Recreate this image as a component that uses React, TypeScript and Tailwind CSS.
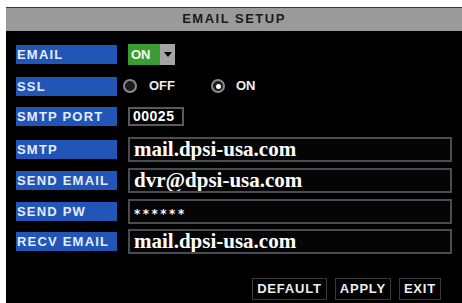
import React from "react"

const labelCls =
  "w-[101px] h-[19px] bg-[#2256b6] text-[#e4ecff] text-[13px] font-bold tracking-[1.2px] leading-[19px] pl-[1px] whitespace-nowrap"

const Label = ({ text }: { text: string }) => (
  <div className={labelCls} style={{ fontFamily: '"Liberation Sans", sans-serif' }}>
    {text}
  </div>
)

const TextBox = ({ value, small }: { value: string; small?: boolean }) => (
  <div
    className="w-[324px] h-[25px] border-2 border-[#4a4d50] bg-[#050505] text-white font-bold pl-[4px] overflow-hidden"
    style={{ fontFamily: '"Liberation Serif", serif' }}
  >
    {small ? (
      <span
        className="text-[12px] tracking-[2.5px] leading-[24px]"
        style={{ fontFamily: '"DejaVu Sans", sans-serif' }}
      >
        {value}
      </span>
    ) : (
      <span className="text-[21px] leading-[21px]">{value}</span>
    )}
  </div>
)

const Radio = ({ checked }: { checked: boolean }) => (
  <div className="w-[14px] h-[14px] rounded-full border-2 border-[#8a8a8a] bg-[#1c1c1c] flex items-center justify-center">
    {checked ? <div className="w-[5px] h-[5px] rounded-full bg-white" /> : null}
  </div>
)

const Btn = ({ text }: { text: string }) => (
  <div
    className="h-[22px] px-[4px] border border-[#3a3a3a] bg-black text-[#eeeeee] text-[13px] font-bold tracking-[0.8px] leading-[20px]"
    style={{ fontFamily: '"Liberation Sans", sans-serif' }}
  >
    {text}
  </div>
)

export default function App() {
  const sans = { fontFamily: '"Liberation Sans", sans-serif' }
  return (
    <div className="w-[462px] h-[303px] bg-white pt-[7px] pl-[6px] overflow-hidden">
      <div className="w-[456px] h-[296px] bg-black flex flex-col">
        <div
          className="h-[24px] bg-[#9a9a9a] border-t border-[#3c3c3c] text-center text-[#1a1a1a] text-[13px] font-bold tracking-[1.5px] leading-[22px]"
          style={sans}
        >
          EMAIL SETUP
        </div>

        <div className="flex flex-col pl-[10px] pt-[10px]">
          <div className="flex items-center h-[26px] gap-[11px]">
            <Label text="EMAIL" />
            <div className="flex h-[21px]">
              <div
                className="w-[32px] bg-[#3d9b34] text-[#f0fff0] text-[13px] font-bold leading-[21px] pl-[3px]"
                style={sans}
              >
                ON
              </div>
              <div className="w-[15px] bg-[#a4a4a4] flex items-center justify-center">
                <div className="w-0 h-0 border-l-[4px] border-r-[4px] border-t-[5px] border-l-transparent border-r-transparent border-t-black" />
              </div>
            </div>
          </div>

          <div className="flex items-center h-[26px] gap-[6px] mt-[6px]">
            <Label text="SSL" />
            <div className="flex items-center gap-[12px]">
              <Radio checked={false} />
              <span className="text-[#eeeeee] text-[13px] font-bold" style={sans}>
                OFF
              </span>
            </div>
            <div className="flex items-center gap-[11px] ml-[30px]">
              <Radio checked={true} />
              <span className="text-[#eeeeee] text-[13px] font-bold" style={sans}>
                ON
              </span>
            </div>
          </div>

          <div className="flex items-center h-[26px] gap-[11px] mt-[4px]">
            <Label text="SMTP PORT" />
            <div
              className="w-[56px] h-[19px] border-2 border-[#5a5a5a] text-white text-[14px] font-bold leading-[15px] pl-[3px] tracking-[0.5px]"
              style={sans}
            >
              00025
            </div>
          </div>

          <div className="flex items-center h-[26px] gap-[11px] mt-[7px]">
            <Label text="SMTP" />
            <TextBox value="mail.dpsi-usa.com" />
          </div>

          <div className="flex items-center h-[26px] gap-[11px] mt-[5px]">
            <Label text="SEND EMAIL" />
            <TextBox value="dvr@dpsi-usa.com" />
          </div>

          <div className="flex items-center h-[26px] gap-[11px] mt-[5px]">
            <Label text="SEND PW" />
            <TextBox value="******" small />
          </div>

          <div className="flex items-center h-[26px] gap-[11px] mt-[4px]">
            <Label text="RECV EMAIL" />
            <TextBox value="mail.dpsi-usa.com" />
          </div>
        </div>

        <div className="flex justify-end gap-[8px] pr-[21px] mt-[24px]">
          <Btn text="DEFAULT" />
          <Btn text="APPLY" />
          <Btn text="EXIT" />
        </div>
      </div>
    </div>
  )
}
